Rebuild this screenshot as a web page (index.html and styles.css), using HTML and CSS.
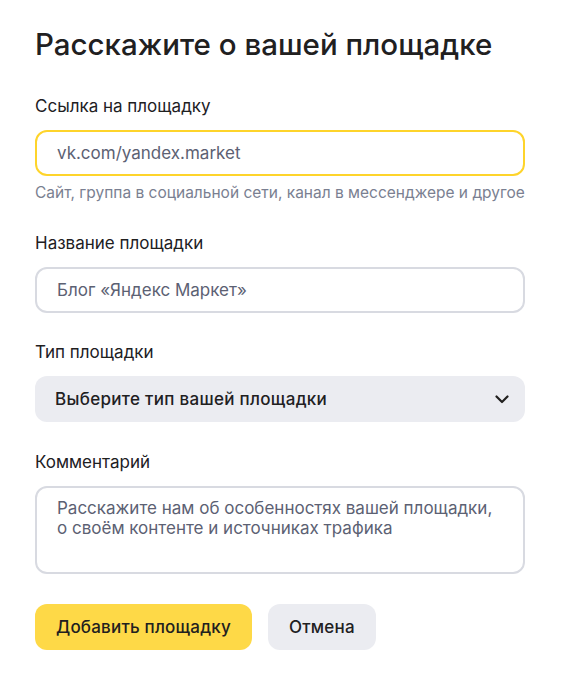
FILE: index.html
```html
<!DOCTYPE html>
<html lang="ru">
<head>
    <meta charset="UTF-8">
    <meta name="viewport" content="width=device-width, initial-scale=1.0">
    <title>Добавить площадку</title>
    <link rel="stylesheet" href="styles.css">
</head>
<body>
    <div class="page">
        <h1>Расскажите о вашей площадке</h1>

        <form class="form">
            <div class="field">
                <label class="label" for="site-url">Ссылка на площадку</label>
                <input class="input input-focus" type="text" id="site-url" placeholder="vk.com/yandex.market">
                <div class="hint">Сайт, группа в социальной сети, канал в мессенджере и другое</div>
            </div>

            <div class="field">
                <label class="label" for="site-name">Название площадки</label>
                <input class="input" type="text" id="site-name" placeholder="Блог «Яндекс Маркет»">
            </div>

            <div class="field">
                <span class="label">Тип площадки</span>
                <button type="button" class="select">
                    <span>Выберите тип вашей площадки</span>
                    <svg class="chevron" width="14" height="9" viewBox="0 0 14 9">
                        <path d="M1.5 1.5 7 7l5.5-5.5" fill="none" stroke="#21201f" stroke-width="2.2" stroke-linecap="round" stroke-linejoin="round"/>
                    </svg>
                </button>
            </div>

            <div class="field">
                <label class="label" for="comment">Комментарий</label>
                <textarea class="input textarea" id="comment" placeholder="Расскажите нам об особенностях вашей площадки, о своём контенте и источниках трафика"></textarea>
            </div>

            <div class="actions">
                <button type="button" class="btn btn-primary">Добавить площадку</button>
                <button type="button" class="btn btn-secondary">Отмена</button>
            </div>
        </form>
    </div>
</body>
</html>
```

FILE: styles.css
```css
body {
    margin: 0;
    font-family: "Inter", "Open Sans", sans-serif;
    color: #21201f;
    background-color: #ffffff;
}

.page {
    padding: 24px 36px 20px 35px;
}

h1 {
    margin: 0 0 32px;
    font-size: 29.5px;
    line-height: 40px;
    font-weight: 500;
}

.form {
    display: flex;
    flex-direction: column;
    gap: 29.5px;
}

.field {
    display: flex;
    flex-direction: column;
}

.label {
    font-size: 17px;
    line-height: 20px;
    margin-bottom: 14px;
}

.input {
    box-sizing: border-box;
    width: 100%;
    height: 46px;
    padding: 0 20px;
    font-family: inherit;
    font-size: 17px;
    color: #21201f;
    background: #ffffff;
    border: 2px solid #d8dae1;
    border-radius: 12px;
    outline: none;
}

.input::placeholder {
    color: #5c6173;
}

.input-focus {
    border-color: #fed42b;
    caret-color: #21201f;
}

.hint {
    margin-top: 7px;
    font-size: 15.5px;
    line-height: 20px;
    color: #7a7f91;
    white-space: nowrap;
}

.select {
    display: flex;
    align-items: center;
    justify-content: space-between;
    height: 46px;
    padding: 0 16px 0 20px;
    font-family: inherit;
    font-size: 17px;
    font-weight: 500;
    letter-spacing: 0.3px;
    color: #21201f;
    background: #ebecf1;
    border: none;
    border-radius: 12px;
    text-align: left;
}

.textarea {
    height: 88px;
    padding: 10px 20px;
    line-height: 20px;
    resize: none;
}

.actions {
    display: flex;
    gap: 16px;
    padding-top: 1px;
}

.btn {
    height: 46px;
    padding: 0 21px;
    font-family: inherit;
    font-size: 17px;
    font-weight: 500;
    letter-spacing: 0.2px;
    color: #21201f;
    border: none;
    border-radius: 12px;
    cursor: pointer;
}

.btn-primary {
    background-color: #fed947;
}

.btn-secondary {
    background-color: #ebecf1;
}
```
